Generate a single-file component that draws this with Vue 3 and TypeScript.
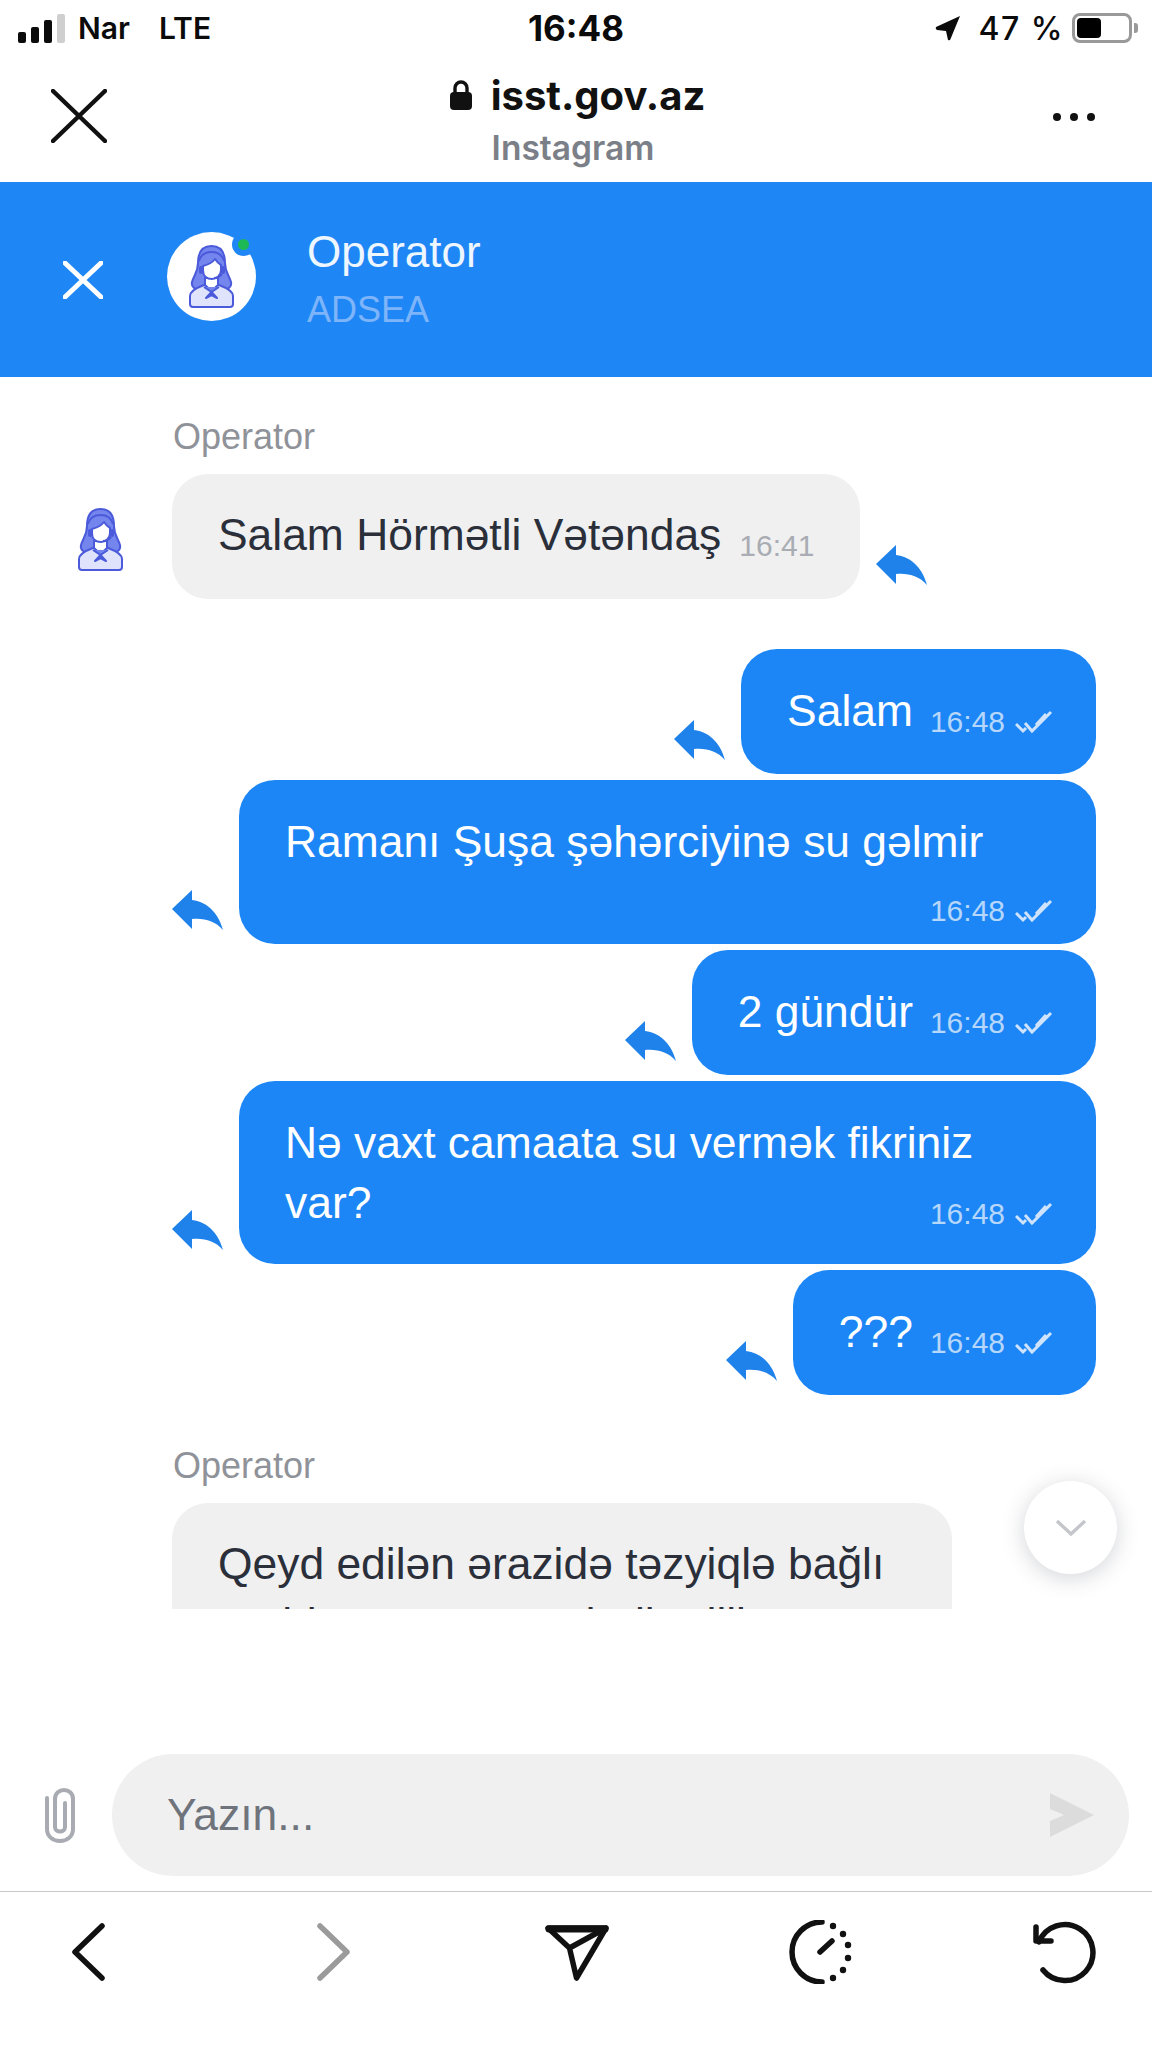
<script setup lang="ts">
interface Outgoing {
  text: string
  kind?: 'stacked' | 'two'
}

// Operator's replies sit left, the citizen's messages right
const outgoing: Outgoing[] = [
  { text: 'Salam' },
  { text: 'Ramanı Şuşa şəhərciyinə su gəlmir', kind: 'stacked' },
  { text: '2 gündür' },
  { text: 'Nə vaxt camaata su vermək fikriniz var?', kind: 'two' },
  { text: '???' },
]
const clockDots = [
  [44, 6],
  [54, 14],
  [59, 25],
  [59, 38],
  [54, 50],
  [44, 58],
]
</script>

<template>
  <div class="phone">
    <svg class="defs" width="0" height="0" aria-hidden="true">
      <symbol id="reply" viewBox="0 0 51 40">
        <path d="M0 19 L20 0 V10 C37 12 47 25 51 40 C43 31 33 28 20 29 V39 Z" fill="#1f82ea" />
      </symbol>
      <symbol id="ticks" viewBox="0 0 38 24">
        <path d="M1 14 L8 21 L11 18 M10 13 L17 21 L36 2 M21 15 L31 4" fill="none" stroke="currentColor" stroke-width="3" />
      </symbol>
      <symbol id="agent" viewBox="0 0 45 63">
        <g stroke="#4a5ada" stroke-width="2" stroke-linejoin="round">
          <path d="M22.5 1 C12 1 9 9 9 18 C9 27 5 30 3 37 C2 42 6 45 11 44 L34 44 C39 45 43 42 42 37 C40 30 36 27 36 18 C36 9 33 1 22.5 1 Z" fill="#7485ee" />
          <path d="M1 59 V51 C1 46 7 43 15 40 L30 40 C38 43 44 46 44 51 V59 Q44 62 41 62 H4 Q1 62 1 59 Z" fill="#dfe3fb" />
          <path d="M16 33 V40 L22.5 46 L29 40 V33 Z" fill="#fff" />
          <path d="M14 21 C18 20 23 18 26 14 C28 17 30 19 32 20 V25 C32 31 27 34 23 34 C18 34 14 31 14 25 Z" fill="#fff" />
          <path d="M10 16 C12 9 17 7 22.5 7 C28 7 33 9 35 16" fill="none" />
          <path d="M33 29 C31 32 28 33 25 33" fill="none" />
          <path d="M15 42 L22.5 47 L17 53 L22.5 50 L28 53 L22.5 47 L30 42" fill="#7485ee" />
        </g>
        <rect x="10" y="21" width="4" height="8" rx="2" fill="#4a5ada" />
        <rect x="32" y="21" width="4" height="8" rx="2" fill="#4a5ada" />
      </symbol>
    </svg>

    <header class="status">
      <div class="status-left">
        <div class="signal">
          <i class="b1"></i><i class="b2"></i><i class="b3"></i><i class="b4"></i>
        </div>
        <span>Nar</span>
        <span class="lte">LTE</span>
      </div>
      <strong class="clock">16:48</strong>
      <div class="status-right">
        <svg class="loc" viewBox="0 0 26 26" width="26" height="26">
          <path d="M25 1 L1 12 Q0 14 2 15 L11 16 L13 25 Q15 26 15.5 24 Z" fill="#0b0b0b" />
        </svg>
        <span class="pct">47 %</span>
        <div class="battery"><i></i></div>
        <div class="nub"></div>
      </div>
    </header>

    <nav class="browser">
      <svg class="close" viewBox="0 0 56 54" width="56" height="54">
        <path d="M2 2 L54 52 M54 2 L2 52" stroke="#111" stroke-width="4.5" stroke-linecap="round" />
      </svg>
      <div class="site">
        <div class="url">
          <svg viewBox="0 0 24 30" width="24" height="30">
            <path d="M6 13 V8 A6 6 0 0 1 18 8 V13" fill="none" stroke="#111" stroke-width="3.4" />
            <rect x="1" y="12" width="22" height="18" rx="4" fill="#111" />
          </svg>
          <b>isst.gov.az</b>
        </div>
        <div class="from">Instagram</div>
      </div>
      <div class="dots"><i></i><i></i><i></i></div>
    </nav>

    <section class="chat-head">
      <svg class="head-x" viewBox="0 0 40 38" width="40" height="38">
        <path d="M2 2 L38 36 M38 2 L2 36" stroke="#fff" stroke-width="5" stroke-linecap="round" />
      </svg>
      <div class="head-avatar">
        <svg width="45" height="63"><use href="#agent" /></svg>
        <span class="online"></span>
      </div>
      <div class="head-text">
        <div class="head-name">Operator</div>
        <div class="head-org">ADSEA</div>
      </div>
    </section>

    <div class="chat-wrap">
      <main class="chat">
        <div class="sender">Operator</div>
        <div class="row in">
          <div class="avatar"><svg width="45" height="63"><use href="#agent" /></svg></div>
          <div class="bubble grey">
            <span class="text">Salam Hörmətli Vətəndaş</span>
            <span class="time">16:41</span>
          </div>
          <svg class="reply in-reply" width="51" height="40"><use href="#reply" /></svg>
        </div>

        <div class="out-list">
          <div v-for="(m, i) in outgoing" :key="i" class="row out">
            <svg class="reply" width="51" height="40"><use href="#reply" /></svg>
            <div class="bubble blue" :class="m.kind">
              <span class="text">{{ m.text }}</span>
              <span class="time">16:48 <svg class="tick" width="38" height="24"><use href="#ticks" /></svg></span>
            </div>
          </div>
        </div>

        <div class="sender second">Operator</div>
        <div class="row in">
          <div class="avatar"></div>
          <div class="bubble grey">
            <span class="text">Qeyd edilən ərazidə təzyiqlə bağlı problem yaranmış həll edilir</span>
          </div>
        </div>
      </main>
      <button class="to-bottom" type="button">
        <svg viewBox="0 0 32 18" width="32" height="18">
          <path d="M2 2 L16 15 L30 2" fill="none" stroke="#c4c6cc" stroke-width="3.4" />
        </svg>
      </button>
    </div>

    <div class="composer">
      <svg class="clip" viewBox="0 0 32 56" width="32" height="56">
        <path d="M21 15 V39 C21 45 11 45 11 39 V11 C11 -1 29 -1 29 11 V41 C29 57 3 57 3 41 V10" transform="translate(0 1)" fill="none" stroke="#a8abb1" stroke-width="4" stroke-linecap="round" />
      </svg>
      <div class="input">
        <span class="placeholder">Yazın...</span>
        <svg viewBox="0 0 44 44" width="44" height="44">
          <path d="M0 0 L44 22 L0 44 L0 28 L14 22 L0 16 Z" fill="#dcdcdc" />
        </svg>
      </div>
    </div>

    <footer class="toolbar">
      <svg viewBox="0 0 64 64" width="64" height="64">
        <path d="M46 6 L19 32 L46 58" class="tool" />
      </svg>
      <svg viewBox="0 0 64 64" width="64" height="64">
        <path d="M20 6 L47 32 L20 58" class="tool muted" />
      </svg>
      <svg viewBox="0 0 64 64" width="64" height="64">
        <path d="M3 8 H61 L31.5 58 L24.5 28 Z M24.5 28 L61 8" class="tool" />
        <path d="M4 9 H60" class="tool thick" />
      </svg>
      <svg viewBox="0 0 64 64" width="64" height="64">
        <path d="M33 2 A30 30 0 0 0 33 62 M31 32 L43 21" class="tool" />
        <circle v-for="d in clockDots" :key="d[1]" :cx="d[0]" :cy="d[1]" r="3.2" fill="#111" />
      </svg>
      <svg viewBox="0 0 64 64" width="64" height="64">
        <path d="M10 50 A28 28 0 1 0 6 22 M3 7 V21 H18" class="tool" />
      </svg>
    </footer>
  </div>
</template>

<style>
html,
body {
  margin: 0;
  background: #fff;
}
</style>

<style scoped>
.phone {
  width: 1152px;
  height: 2048px;
  display: flex;
  flex-direction: column;
  overflow: hidden;
  background: #fff;
  font-family: "Liberation Sans", Arial, sans-serif;
}
.defs {
  position: absolute;
}

/* status bar */
.status {
  height: 56px;
  flex: none;
  display: grid;
  grid-template-columns: 1fr auto 1fr;
  align-items: center;
  padding: 0 14px 0 18px;
  font-family: Inter, sans-serif;
  font-size: 30px;
  font-weight: 600;
  color: #0b0b0b;
}
.status-left {
  display: flex;
  align-items: center;
}
.signal {
  display: flex;
  align-items: flex-end;
  gap: 5px;
  height: 30px;
  margin-right: 13px;
}
.signal i {
  width: 8px;
  border-radius: 2px;
  background: #0b0b0b;
}
.b1 { height: 11px; }
.b2 { height: 16px; }
.b3 { height: 23px; }
.signal .b4 {
  height: 29px;
  background: #cfcfcf;
}
.lte {
  margin-left: 29px;
}
.clock {
  font-size: 35px;
  font-weight: 700;
  margin-right: 4px;
}
.status-right {
  display: flex;
  align-items: center;
  justify-content: flex-end;
}
.pct {
  margin-left: 17px;
  margin-right: 8px;
  font-size: 32px;
  font-weight: 500;
  letter-spacing: 1.5px;
}
.battery {
  box-sizing: border-box;
  width: 60px;
  height: 30px;
  border: 3px solid #999;
  border-radius: 8px;
  padding: 2px;
}
.battery i {
  display: block;
  width: 24px;
  height: 100%;
  border-radius: 4px;
  background: #000;
}
.nub {
  width: 4px;
  height: 10px;
  margin-left: 2px;
  background: #999;
  border-radius: 0 3px 3px 0;
}

/* in-app browser bar */
.browser {
  height: 126px;
  flex: none;
  display: grid;
  grid-template-columns: 1fr auto 1fr;
  padding: 0 57px 0 51px;
  align-items: start;
}
.close {
  margin-top: 33px;
}
.site {
  display: flex;
  flex-direction: column;
  align-items: center;
  margin-top: 17px;
}
.url {
  display: flex;
  align-items: center;
  gap: 18px;
  height: 44px;
  margin-left: 8px;
  font-family: Inter, sans-serif;
  font-size: 40px;
  color: #111;
}
.from {
  margin-top: 11px;
  font-family: Inter, sans-serif;
  font-size: 33.5px;
  font-weight: 600;
  color: #7b8088;
}
.dots {
  justify-self: end;
  display: flex;
  gap: 9px;
  margin-top: 57px;
}
.dots i {
  width: 8px;
  height: 8px;
  border-radius: 50%;
  background: #111;
}

/* chat header */
.chat-head {
  height: 195px;
  flex: none;
  display: flex;
  align-items: center;
  padding-left: 63px;
  background: #1f87f5;
}
.head-avatar {
  position: relative;
  width: 89px;
  height: 89px;
  margin-left: 64px;
  margin-bottom: 7px;
  border-radius: 50%;
  background: #fff;
  display: flex;
  align-items: center;
  justify-content: center;
}
.online {
  position: absolute;
  top: 1px;
  right: 1px;
  width: 11px;
  height: 11px;
  border-radius: 50%;
  background: #1db954;
  border: 6px solid #1f87f5;
}
.head-text {
  margin-left: 51px;
  margin-top: -2px;
}
.head-name {
  font-size: 44px;
  line-height: 50px;
  color: #eef6ff;
}
.head-org {
  margin-top: 12px;
  font-size: 36px;
  line-height: 42px;
  color: #7eb4f9;
}

/* messages */
.chat-wrap {
  position: relative;
  height: 1232px;
  flex: none;
}
.chat {
  height: 100%;
  box-sizing: border-box;
  overflow: hidden;
  padding: 40px 56px 0 0;
}
.sender {
  margin-left: 173px;
  margin-bottom: 17px;
  font-size: 36px;
  line-height: 40px;
  color: #8f9299;
}
.sender.second {
  margin-top: 51px;
}
.row {
  display: flex;
  align-items: center;
}
.avatar {
  flex: none;
  width: 172px;
  display: flex;
  justify-content: center;
  padding: 5px 0 0 28px;
  box-sizing: border-box;
}
.in:last-child .bubble {
  width: 780px;
  box-sizing: border-box;
}
.in-reply {
  margin-left: 16px;
  align-self: flex-end;
  margin-bottom: 14px;
}
.out-list {
  display: flex;
  flex-direction: column;
  gap: 6px;
  margin-top: 50px;
}
.out {
  justify-content: flex-end;
}
.out .reply {
  flex: none;
  align-self: flex-end;
  margin-right: 16px;
  margin-bottom: 14px;
}
.bubble {
  display: flow-root;
  padding: 32px 46px;
  border-radius: 36px;
  font-size: 44.4px;
  line-height: 60px;
}
.blue {
  max-width: 857px;
  box-sizing: border-box;
  background: #1c86f6;
  color: #fff;
}
.blue.two {
  padding-bottom: 30px;
}
.blue.stacked {
  padding-bottom: 13px;
}
.grey {
  padding: 31px 46px 33px;
  background: #f0f0f1;
  color: #2a2f3a;
}
.time {
  float: right;
  display: flex;
  align-items: center;
  gap: 10px;
  height: 40px;
  margin-top: 21px;
  margin-left: 18px;
  font-size: 30px;
  line-height: 40px;
  color: #a9acb3;
}
.stacked .time {
  margin-top: 19px;
}
.blue .time {
  margin-left: 17px;
  margin-right: -3px;
  color: #b6d7fb;
}
.tick {
  color: #cfe4fc;
}
.to-bottom {
  position: absolute;
  top: 1104px;
  left: 1024px;
  width: 93px;
  height: 93px;
  padding: 0;
  border: 0;
  border-radius: 50%;
  background: #fff;
  box-shadow: 0 4px 22px rgba(60, 64, 80, 0.22);
  display: flex;
  align-items: center;
  justify-content: center;
}

/* message input */
.composer {
  margin-top: auto;
  display: flex;
  align-items: center;
  padding: 0 23px 15px 44px;
}
.clip {
  flex: none;
  margin-right: 36px;
}
.input {
  flex: 1;
  height: 122px;
  border-radius: 61px;
  background: #f0f0f1;
  display: flex;
  align-items: center;
  justify-content: space-between;
  padding: 0 35px 0 55px;
}
.placeholder {
  font-size: 44.4px;
  color: #6f747c;
}

/* browser toolbar */
.toolbar {
  height: 128px;
  padding-top: 28px;
  flex: none;
  display: flex;
  justify-content: space-between;
  align-items: flex-start;
  padding-left: 56px;
  padding-right: 55px;
  border-top: 1px solid #c8c8c8;
}
.tool {
  fill: none;
  stroke: #111;
  stroke-width: 5.5;
  stroke-linecap: round;
  stroke-linejoin: round;
}
.tool.thick {
  stroke-width: 7;
}
.tool.muted {
  stroke: #9b9b9b;
}
</style>
